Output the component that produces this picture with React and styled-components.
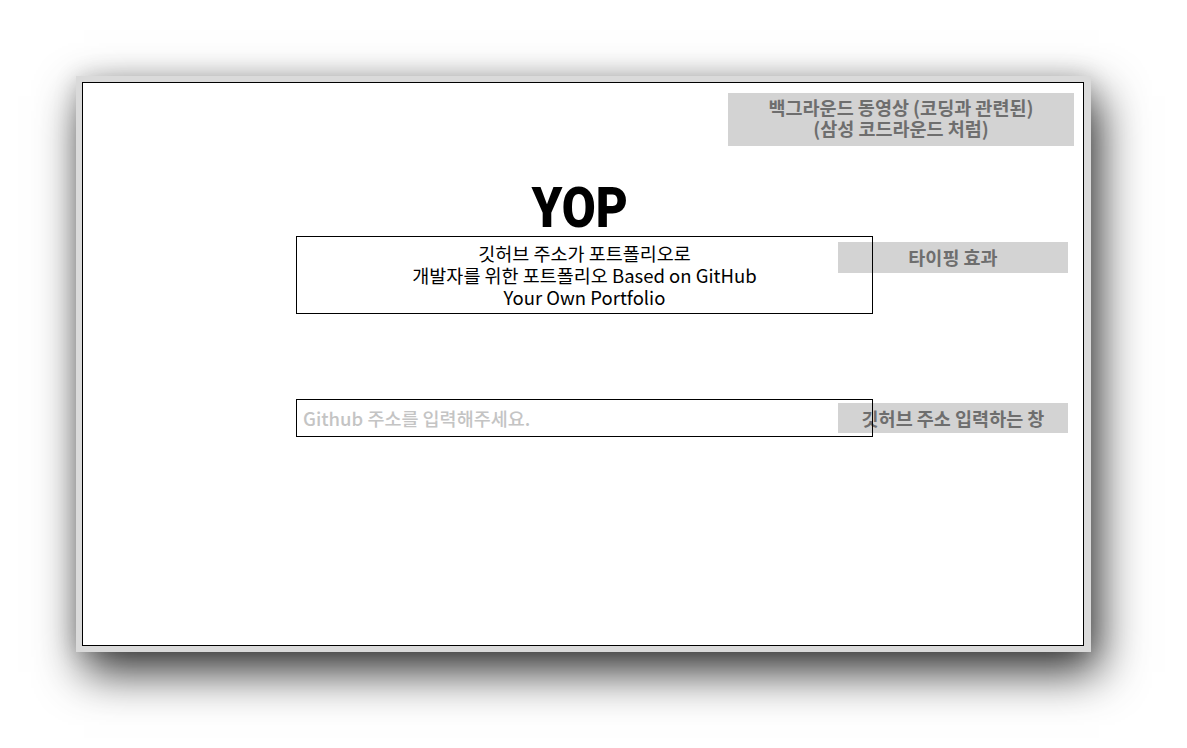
import styled, { createGlobalStyle } from "styled-components";

const GlobalStyle = createGlobalStyle`
  html, body {
    margin: 0;
    background: #ffffff;
    font-family: "Noto Sans CJK KR", "Noto Sans", sans-serif;
  }
`;

const Page = styled.div`
    min-height: 748px;
    box-sizing: border-box;
    padding: 76px 0 0 76px;
    overflow: hidden;
`

const Window = styled.div`
    width: 1015px;
    box-sizing: border-box;
    padding: 6px 7px 6px 6px;
    background: #dadada;
    box-shadow: 8px 20px 44px rgba(0, 0, 0, 0.8), 0 0 22px rgba(0, 0, 0, 0.14);
`

const Canvas = styled.div`
    height: 562px;
    border: 1px solid #000000;
    background: #ffffff;
    display: flex;
    flex-direction: column;
`

const Note = styled.div`
    background: #d3d3d3;
    color: #6e6e6e;
    font-weight: 700;
    font-size: 18.5px;
    line-height: 21px;
    text-align: center;
    box-sizing: border-box;
    width: ${(props) => props.width}px;
    height: ${(props) => props.height}px;
    padding-top: ${(props) => props.padTop || 0}px;
`

const TopNote = styled(Note)`
    align-self: flex-end;
    margin: 10px 9px 0 0;
`

const SideNote = styled(Note)`
    justify-self: end;
    align-self: start;
    display: flex;
    align-items: center;
    justify-content: center;
    margin-top: ${(props) => props.offset}px;
`

const Title = styled.h1`
    align-self: center;
    margin: 34px 6px 0 0;
    font-family: Roboto, "Liberation Sans", sans-serif;
    font-weight: 900;
    font-size: 56px;
    line-height: 56px;
    height: 56px;
    transform: scaleX(0.88);
    color: #000000;
`

const Layer = styled.div`
    display: grid;
    margin: ${(props) => props.top || 0}px 15px 0 213px;
    > * {
        grid-area: 1 / 1;
    }
`

const TaglineBox = styled.div`
    justify-self: start;
    width: 577px;
    height: 78px;
    box-sizing: border-box;
    border: 1px solid #000000;
    padding: 5px 0;
    text-align: center;
    font-size: 18.5px;
    font-weight: 400;
    line-height: 22px;
    color: #000000;
`

const AddressInput = styled.input`
    justify-self: start;
    width: 577px;
    height: 38px;
    box-sizing: border-box;
    border: 1px solid #000000;
    border-radius: 0;
    background: transparent;
    padding: 0 6px;
    font-family: "Noto Sans CJK KR", "Noto Sans", sans-serif;
    font-size: 18.5px;
    font-weight: 500;
    outline: none;
    &::placeholder {
        color: #c4c4c4;
        opacity: 1;
    }
`

export default function App() {
    return (
        <>
            <GlobalStyle />
            <Page>
                <Window>
                    <Canvas>
                        <TopNote width={346} height={53} padTop={4}>
                            백그라운드 동영상 (코딩과 관련된)<br />
                            (삼성 코드라운드 처럼)
                        </TopNote>
                        <Title>YOP</Title>
                        <Layer>
                            <SideNote width={230} height={31} offset={6}>타이핑 효과</SideNote>
                            <TaglineBox>
                                깃허브 주소가 포트폴리오로<br />
                                개발자를 위한 포트폴리오 Based on GitHub<br />
                                Your Own Portfolio
                            </TaglineBox>
                        </Layer>
                        <Layer top={85}>
                            <SideNote width={230} height={30} offset={4}>깃허브 주소 입력하는 창</SideNote>
                            <AddressInput placeholder="Github 주소를 입력해주세요." />
                        </Layer>
                    </Canvas>
                </Window>
            </Page>
        </>
    )
}
